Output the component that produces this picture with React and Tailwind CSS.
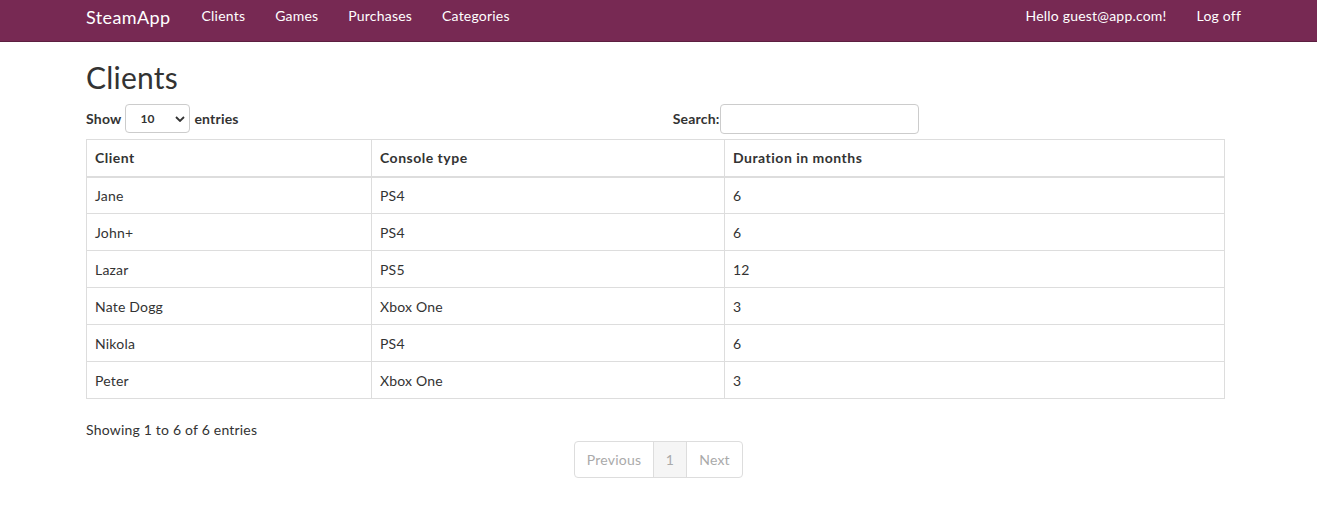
import React from 'react'

const clients = [
  { name: 'Jane', console: 'PS4', months: 6 },
  { name: 'John+', console: 'PS4', months: 6 },
  { name: 'Lazar', console: 'PS5', months: 12 },
  { name: 'Nate Dogg', console: 'Xbox One', months: 3 },
  { name: 'Nikola', console: 'PS4', months: 6 },
  { name: 'Peter', console: 'Xbox One', months: 3 },
]

const links = ['Clients', 'Games', 'Purchases', 'Categories']

export default function App() {
  return (
    <div className="min-h-[520px] bg-white font-['Lato','Open_Sans',sans-serif] text-[14px] tracking-[0.2px] text-[#333]">
      {/* navbar */}
      <nav className="h-[42px] bg-[#772953] border-b border-[#5c1f40] text-white">
        <div className="ml-[71px] mr-[61px] flex h-[41px] items-start pt-[6px] leading-[20px]">
          <span className="px-[15px] text-[18px] leading-[22px] tracking-[0.4px]">SteamApp</span>
          <ul className="ml-[1px] flex">
            {links.map((l) => (
              <li key={l} className="px-[15px]">{l}</li>
            ))}
          </ul>
          <ul className="ml-auto flex">
            <li className="px-[15px]">Hello guest@app.com!</li>
            <li className="px-[15px]">Log off</li>
          </ul>
        </div>
      </nav>

      <main className="ml-[86px] w-[1139px]">
        <h2 className="mt-[17px] text-[30px] leading-[36px]">Clients</h2>

        <div className="mt-[9px] flex h-[29px] items-center">
          <label className="flex items-center gap-[4px] font-bold">
            Show
            <div className="flex h-[29px] w-[65px] items-center justify-between rounded-[4px] border border-[#ccc] pl-[14px] pr-[4px] text-[12px]">
              <span>10</span>
              <svg width="10" height="6" viewBox="0 0 10 6" fill="none" stroke="#333" strokeWidth="1.8">
                <path d="M1 1l4 4 4-4" />
              </svg>
            </div>
            entries
          </label>
          <label className="ml-[434px] flex items-center font-bold">
            Search:
            <div className="h-[30px] w-[199px] rounded-[4px] border border-[#ccc]" />
          </label>
        </div>

        <table className="mt-[6px] w-full border-collapse border border-[#ddd]">
          <thead>
            <tr className="h-[37px] border-b-2 border-[#ddd] text-left font-bold tracking-[0.5px]">
              <th className="w-[285px] border-r border-[#ddd] px-[8px]">Client</th>
              <th className="w-[353px] border-r border-[#ddd] px-[8px]">Console type</th>
              <th className="px-[8px]">Duration in months</th>
            </tr>
          </thead>
          <tbody>
            {clients.map((c) => (
              <tr key={c.name} className="h-[37px] border-t border-[#ddd]">
                <td className="border-r border-[#ddd] px-[8px]">{c.name}</td>
                <td className="border-r border-[#ddd] px-[8px]">{c.console}</td>
                <td className="px-[8px]">{c.months}</td>
              </tr>
            ))}
          </tbody>
        </table>

        <div className="mt-[20px]">Showing 1 to 6 of 6 entries</div>
      </main>

      <div className="mt-[1px] flex justify-center">
        <div className="flex h-[37px] overflow-hidden rounded-[4px] border border-[#ddd] text-[#aaa]">
          <span className="flex w-[78px] items-center justify-center">Previous</span>
          <span className="flex w-[34px] items-center justify-center border-x border-[#ddd] bg-[#f5f5f5]">1</span>
          <span className="flex w-[55px] items-center justify-center">Next</span>
        </div>
      </div>
    </div>
  )
}
